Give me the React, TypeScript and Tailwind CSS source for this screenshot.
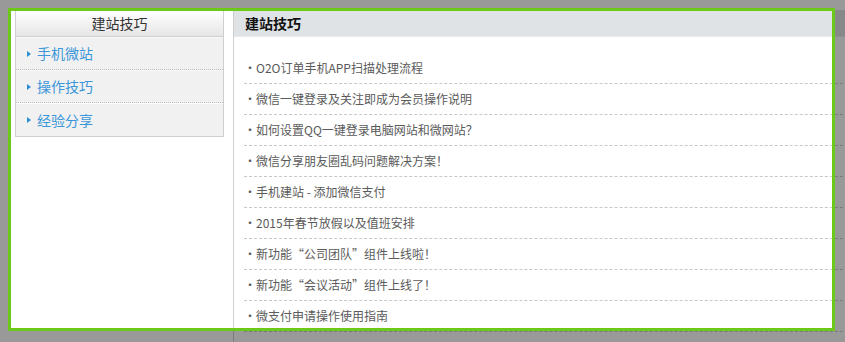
import React from 'react'

const menu = ['手机微站', '操作技巧', '经验分享']

const articles = [
  'O2O订单手机APP扫描处理流程',
  '微信一键登录及关注即成为会员操作说明',
  '如何设置QQ一键登录电脑网站和微网站？',
  '微信分享朋友圈乱码问题解决方案！',
  '手机建站 - 添加微信支付',
  '2015年春节放假以及值班安排',
  '新功能“公司团队”组件上线啦！',
  '新功能“会议活动”组件上线了！',
  '微支付申请操作使用指南',
]

export default function App() {
  return (
    <div
      className="relative w-[845px] h-[342px] overflow-hidden bg-white"
      style={{ fontFamily: '"Noto Sans CJK SC", "Liberation Sans", sans-serif' }}
    >
      <div className="flex items-start pt-[10px] pl-[15px]">
        {/* Sidebar */}
        <div className="w-[209px] shrink-0 border border-[#cfcfcf]">
          <div className="h-[26px] flex items-center justify-center bg-gradient-to-b from-white to-[#e6e6e6] border-b border-[#cfcfcf] text-[14px] text-[#333]">
            建站技巧
          </div>
          {menu.map((m, i) => (
            <div
              key={m}
              className={`h-[33px] flex items-center pl-[11px] bg-[#f1f1f1] border-t border-white ${
                i < menu.length - 1 ? 'border-b border-dotted border-b-[#bdbdbd]' : ''
              }`}
            >
              <span className="w-0 h-0 border-y-[3.5px] border-y-transparent border-l-[4px] border-l-[#2a8fd6] mr-[6px]" />
              <span className="text-[14px] text-[#3b96da]">{m}</span>
            </div>
          ))}
        </div>

        {/* Main */}
        <div className="ml-[9px] w-[720px] shrink-0 h-[340px] border-l border-[#cfcfcf]">
          <div className="h-[27px] flex items-center pl-[11px] bg-[#dfe3e6] border-b border-[#e9ecee] text-[14px] font-bold text-[#111]">
            建站技巧
          </div>
          <ul className="ml-[10px] pt-[16px]">
            {articles.map((a) => (
              <li
                key={a}
                className="h-[31px] flex items-center border-b border-dashed border-[#c8c8c8] text-[12px] text-[#5a5a5a]"
              >
                <span className="w-[12px] text-center">·</span>
                <span>{a}</span>
              </li>
            ))}
          </ul>
        </div>
      </div>

      {/* Highlight frame over dimmed page */}
      <div className="absolute left-[8px] top-[8px] w-[827px] h-[323px] border-[3px] border-[#6cc91a] shadow-[0_0_0_9999px_rgba(0,0,0,0.4)] pointer-events-none" />
    </div>
  )
}
